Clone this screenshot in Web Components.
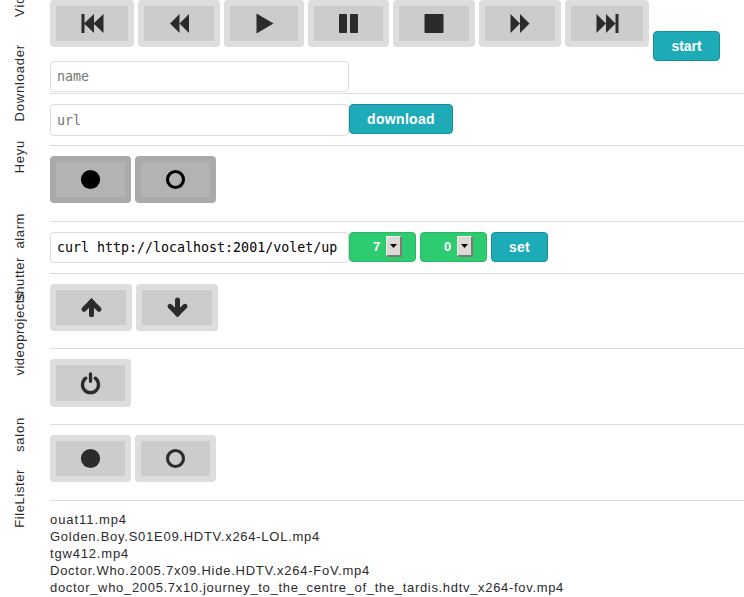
<!DOCTYPE html>
<html lang="en"><head><meta charset="utf-8"><title>Remote</title>
<style>
html,body{margin:0;height:100%;overflow:hidden;background:#fff}
body{font:13px/17px "Liberation Sans",Arial,sans-serif;color:#2b2b2d}
</style></head><body>
<remote-app></remote-app>
<script>
const define=(name,css,html,ready)=>customElements.define(name,class extends HTMLElement{
  constructor(){super();this.attachShadow({mode:'open'}).innerHTML=`<style>*{box-sizing:border-box}${css}</style>${html}`}
  connectedCallback(){if(ready)ready(this,this.shadowRoot)}
});

// Text whose letter spacing is chosen to fill a given length.
define('tracked-text',`:host{display:inline-block;white-space:pre}`,`<slot></slot>`,el=>{
  const n=[...el.textContent].length,vertical=getComputedStyle(el).writingMode!=='horizontal-tb';
  const w=vertical?el.offsetHeight:el.getBoundingClientRect().width;
  el.style.letterSpacing=((+el.getAttribute('length')-w)/n)+'px';
});

// One page section: a vertical caption in the gutter and the controls beside it.
define('module-row',`
:host{display:grid;grid-template-columns:50px 1fr;box-sizing:border-box;height:var(--h);position:relative}
.line{grid-column:2;border-bottom:1px solid #ddd;padding-top:var(--top,10px);min-width:0}
:host([last]) .line{border:0}
.cap{position:absolute;left:11px;bottom:calc(100% - var(--cap));writing-mode:vertical-rl;transform:rotate(180deg);line-height:17px;white-space:pre}
`,`<div class="cap"><slot name="caption"></slot></div><div class="line"><slot></slot></div>`);

define('control-bar',`:host{display:flex;align-items:flex-start;gap:var(--gap,4px)}`,`<slot></slot>`);

const icons={
 first:`<path d="M.5 1h3v19h-3zM3 10.500L13 1v19zM12.500 10.500L22.500 1v19z"/>`,
 back:`<path d="M2 10.500L11.500 1v19zM11.500 10.500L21 1v19z"/>`,
 play:`<path d="M3.500 .5v20l17-10z"/>`,
 pause:`<rect x="2" y="1" width="8" height="19" rx=".7"/><rect x="13" y="1" width="8" height="19" rx=".7"/>`,
 stop:`<rect x="1.500" y="1" width="19" height="19" rx=".7"/>`,
 forward:`<path d="M1.500 1l9.500 9.500L1.500 20zM11 1l9.500 9.500-9.500 9.500z"/>`,
 last:`<path d="M.5 1l9.500 9.500L.5 20zM10 1l9.500 9.500L10 20zM19.500 1h3v19h-3z"/>`,
 on:`<circle cx="11.500" cy="10.500" r="9.600"/>`,
 off:`<circle cx="11.500" cy="10.500" r="8" fill="none" stroke="currentColor" stroke-width="3.100"/>`,
 up:`<path d="M11.500 17.800V5M4 12.200l7.500-7.500 7.500 7.500" fill="none" stroke="currentColor" stroke-width="5" stroke-linecap="round"/><path d="M11.500 1.300l3.500 3.500h-7z"/>`,
 down:`<path d="M11.500 3v13M4 9.300l7.500 7.500 7.500-7.500" fill="none" stroke="currentColor" stroke-width="5" stroke-linecap="round"/><path d="M11.500 20.200l3.500-3.500h-7z"/>`,
 power:`<path d="M6.800 5.200a8 8 0 1 0 9.400 0M11.500 .8v7.500" fill="none" stroke="currentColor" stroke-width="3.300" stroke-linecap="round"/>`
};
define('icon-button',`
:host{display:block}
button{display:flex;align-items:center;justify-content:center;width:var(--w,81px);height:var(--bh,47px);padding:0;border:6px solid #ddd;border-radius:4px;background:#ccc;color:#2b2b2d}
:host([dark]) button{border-color:#aaa;background-color:#b3b3b3;color:#000}
svg{display:block;fill:currentColor;width:23px;height:21px;flex:none;overflow:visible}
`,`<button></button>`,(el,r)=>{const b=r.querySelector('button');b.innerHTML=`<svg viewBox="0 0 23 21">${icons[el.getAttribute('icon')]}</svg>`;b.setAttribute('aria-label',el.getAttribute('icon'))});

define('text-box',`
:host{display:block}
input{display:block;width:299px;height:var(--ih,31px);padding:0 6px;border:1px solid #ddd;border-radius:4px;background:#fff;color:#000;font:13.300px "DejaVu Sans Mono",monospace;outline:0}
input::placeholder{color:#757575;opacity:1}
`,`<input>`,(el,r)=>{const i=r.querySelector('input');i.placeholder=el.getAttribute('placeholder')||'';i.value=el.getAttribute('value')||''});

define('action-button',`
:host{display:block}
button{display:flex;align-items:center;justify-content:center;width:var(--w);height:30px;padding:0 0 1px;border:1px solid #198f9b;border-radius:4px;background:#1eabb8;color:#fff;font:bold 14px "Liberation Sans",Arial,sans-serif}
`,`<button><span><slot></slot></span></button>`);

define('number-picker',`
:host{display:flex;align-items:center;box-sizing:border-box;width:67px;height:30px;padding-left:23px;border:1px solid #29b765;border-radius:4px;background:#2ecc71;color:#fff;font:bold 13px "Liberation Sans",Arial,sans-serif}
.value{width:13px;padding-bottom:1px}
.drop{width:16px;height:21px;margin-bottom:1px;border:1px solid;border-color:#eee #7d7975 #7d7975 #eee;border-right-width:2px;border-bottom-width:2px;background:#dcdad5;display:flex;align-items:center;justify-content:center}
svg{display:block}
`,`<span class="value"><slot></slot></span><span class="drop"><svg width="7" height="4" viewBox="0 0 7 4"><path d="M0 0h7L3.500 4z"/></svg></span>`);

define('file-list',`:host{display:flex;flex-direction:column;align-items:flex-start}`,`<slot></slot>`);

define('remote-app',`:host{display:block;width:744px;height:597px;overflow:hidden}
.start{margin-top:31px}`,`
<module-row style="--h:94px;--top:0;--cap:17px"><tracked-text slot="caption" length="38">Video</tracked-text>
 <control-bar>
 <icon-button icon="first" style="--w:84px"></icon-button><icon-button icon="back" style="--w:82px"></icon-button><icon-button icon="play" style="--w:80px"></icon-button><icon-button icon="pause" style="--w:81px"></icon-button><icon-button icon="stop" style="--w:82px"></icon-button><icon-button icon="forward" style="--w:82px"></icon-button><icon-button icon="last" style="--w:84px"></icon-button>
 <action-button class="start" style="--w:67px"><tracked-text length="30">start</tracked-text></action-button></control-bar>
 <text-box placeholder="name"></text-box></module-row>
<module-row style="--h:52px;--cap:27px"><tracked-text slot="caption" length="77">Downloader</tracked-text>
 <control-bar style="--gap:0"><text-box placeholder="url" style="--ih:32px"></text-box><action-button style="--w:104px"><tracked-text length="68">download</tracked-text></action-button></control-bar></module-row>
<module-row style="--h:76px;--cap:27px"><tracked-text slot="caption" length="33">Heyu</tracked-text>
 <control-bar><icon-button dark icon="on"></icon-button><icon-button dark icon="off"></icon-button></control-bar></module-row>
<module-row style="--h:52px;--cap:27px"><tracked-text slot="caption" length="36">alarm</tracked-text>
 <control-bar style="--gap:0"><text-box value="curl http://localhost:2001/volet/up"></text-box><control-bar style="--gap:4px"><number-picker>7</number-picker><number-picker>0</number-picker><action-button style="--w:57px"><tracked-text length="21">set</tracked-text></action-button></control-bar></control-bar></module-row>
<module-row style="--h:75px;--cap:27px"><tracked-text slot="caption" length="44">shutter</tracked-text>
 <control-bar><icon-button icon="up" style="--w:82px"></icon-button><icon-button icon="down" style="--w:82px"></icon-button></control-bar></module-row>
<module-row style="--h:76px;--cap:27px"><tracked-text slot="caption" length="84">videoprojects</tracked-text>
 <control-bar><icon-button icon="power" style="--bh:48px"></icon-button></control-bar></module-row>
<module-row style="--h:76px;--cap:27px"><tracked-text slot="caption" length="35">salon</tracked-text>
 <control-bar><icon-button icon="on"></icon-button><icon-button icon="off"></icon-button></control-bar></module-row>
<module-row last style="--h:96px;--cap:27px"><tracked-text slot="caption" length="59">FileLister</tracked-text>
 <file-list><tracked-text length="77">ouat11.mp4</tracked-text><tracked-text length="270">Golden.Boy.S01E09.HDTV.x264-LOL.mp4</tracked-text><tracked-text length="79">tgw412.mp4</tracked-text><tracked-text length="320">Doctor.Who.2005.7x09.Hide.HDTV.x264-FoV.mp4</tracked-text><tracked-text length="514">doctor_who_2005.7x10.journey_to_the_centre_of_the_tardis.hdtv_x264-fov.mp4</tracked-text></file-list></module-row>
`);
</script></body></html>
